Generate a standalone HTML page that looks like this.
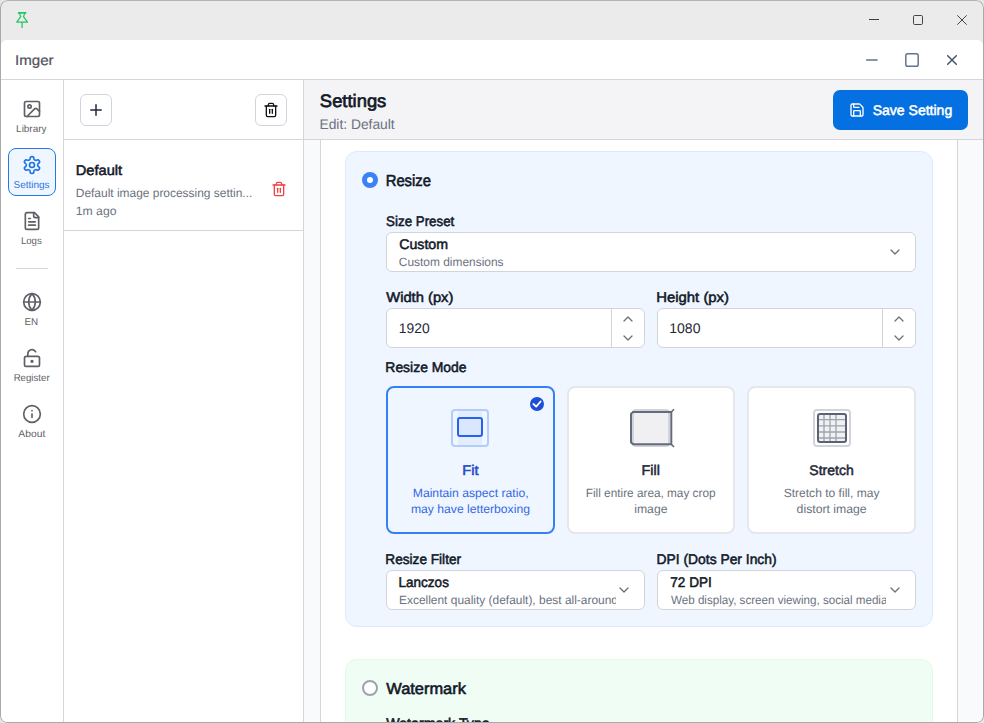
<!DOCTYPE html>
<html>
<head>
<meta charset="utf-8">
<title>Imger</title>
<style>
*{box-sizing:border-box;margin:0;padding:0}
html,body{width:984px;height:723px;overflow:hidden;background:#e4e4e4;font-family:"Liberation Sans",sans-serif;}
body{position:relative}
.abs{position:absolute}
.t{position:absolute;white-space:nowrap;line-height:20px;height:20px;color:#1f2937;text-rendering:geometricPrecision}
.b{font-weight:bold}
svg{position:absolute;overflow:visible}
#outer{left:0;top:0;width:984px;height:723px;background:#ebebeb;border-radius:8px 8px 7px 7px;overflow:hidden}
#frame{left:0;top:0;width:984px;height:723px;border:1px solid #a9a9a9;border-top-color:#b4b4b4;border-radius:8px 8px 7px 7px;z-index:50}
#inner{left:1px;top:40px;width:982px;height:690px;background:#fff;border-radius:6px 6px 0 0;overflow:hidden}
/* inside #inner coords are page minus (1,40); we instead use page coords via #pg */
#pg{left:-1px;top:-40px;width:984px;height:723px}
#tbar{left:0;top:40px;width:984px;height:40px;border-bottom:1px solid #d5d5da;background:#fff}
#nav{left:0;top:80px;width:64px;height:650px;border-right:1px solid #d5d5da;background:#fff}
#list{left:64px;top:80px;width:240px;height:650px;border-right:1px solid #d5d5da;background:#fff}
#main{left:304px;top:80px;width:680px;height:650px;background:#f9fafb}
#mhead{left:304px;top:80px;width:680px;height:60px;background:#f4f4f6;border-bottom:1px solid #d5d5da}
#card{left:320px;top:140px;width:638px;height:600px;background:#fff;border-left:1px solid #d5d5da;border-right:1px solid #d5d5da}
.nl{font-size:11px;text-align:center;color:#5f5f66}
.lab{font-size:14px;color:#111827}
.box{border:1px solid #d1d5db;border-radius:6px;background:#fff}
.sv{font-size:14px;color:#111827}
.sd{font-size:12.500px;color:#6b7280}
.num{font-size:14px;color:#1f2937}
.mt{font-size:14.500px;text-align:center;color:#1f2937}
.md{font-size:12.500px;text-align:center;color:#6b7280;line-height:16px;height:16px}
.chev{fill:none;stroke:#6f7076;stroke-width:1.300;stroke-linecap:round;stroke-linejoin:round}
#grid{background-image:linear-gradient(to right,transparent 5px,#9ca3af 5px,#9ca3af 6px,transparent 6px),linear-gradient(to bottom,transparent 5px,#9ca3af 5px,#9ca3af 6px,transparent 6px);background-size:6px 6px}
</style>
</head>
<body>
<div id="outer" class="abs">
  <!-- outer title bar icons -->
  <svg style="left:14px;top:11px" width="16" height="18" viewBox="0 0 16 18" fill="none" stroke="#25c464" stroke-width="1.250" stroke-linejoin="round" stroke-linecap="round"><path d="M4.600 1.900H11.600" stroke-width="1.700"/><path d="M5.500 2.400L6.700 5.700L2.700 11.100H13.500L9.500 5.700L10.700 2.400M8.100 11.100V16.500"/></svg>
  <svg style="left:869px;top:19px" width="10" height="1" viewBox="0 0 10 1"><rect width="10" height="1" fill="#3c3c3c"/></svg>
  <svg style="left:913px;top:15px" width="10" height="10" viewBox="0 0 10 10"><rect x="0.500" y="0.500" width="9" height="9" rx="1.200" stroke="#444" stroke-width="1" fill="none"/></svg>
  <svg style="left:957px;top:15px" width="10" height="10" viewBox="0 0 10 10"><path d="M0.300 0.300L9.700 9.700M9.700 0.300L0.300 9.700" stroke="#444" stroke-width="1" fill="none"/></svg>
  <div id="inner" class="abs"><div id="pg" class="abs">
    <div id="tbar" class="abs"></div>
    <div id="nav" class="abs"></div>
    <div id="list" class="abs"></div>
    <div id="main" class="abs"></div>
    <div id="mhead" class="abs"></div>
    <div id="card" class="abs"></div>
    <!-- inner title bar -->
    <svg style="left:866px;top:59px" width="12" height="2" viewBox="0 0 12 2"><path d="M0.7 1H11" stroke="#64748b" stroke-width="1.6" stroke-linecap="round" fill="none"/></svg>
    <svg style="left:905px;top:53px" width="14" height="14" viewBox="0 0 14 14"><rect x="0.8" y="0.8" width="12.4" height="12.4" rx="1.8" stroke="#64748b" stroke-width="1.5" fill="none"/></svg>
    <svg style="left:947px;top:55px" width="10" height="10" viewBox="0 0 10 10"><path d="M0.7 0.7L9.3 9.3M9.3 0.7L0.7 9.3" stroke="#475569" stroke-width="1.5" stroke-linecap="round" fill="none"/></svg>

    <!-- nav -->
    <div class="abs" style="left:8px;top:148px;width:48px;height:48px;border:1px solid #2179e8;border-radius:8px;background:#eff6ff"></div>
    <div class="abs" style="left:16px;top:268px;width:32px;height:1px;background:#d5d5da"></div>
    <!-- Library icon -->
    <svg style="left:22px;top:99px" width="20" height="20" viewBox="0 0 24 24" fill="none" stroke="#5f5f66" stroke-width="2" stroke-linecap="round" stroke-linejoin="round"><rect x="3" y="3" width="18" height="18" rx="2"/><circle cx="9" cy="9" r="2"/><path d="m21 15-3.086-3.086a2 2 0 0 0-2.828 0L6 21"/></svg>
    <!-- Settings icon -->
    <svg style="left:22px;top:155px" width="20" height="20" viewBox="0 0 24 24" fill="none" stroke="#1f75e6" stroke-width="2" stroke-linecap="round" stroke-linejoin="round"><path d="M12.22 2h-.44a2 2 0 0 0-2 2v.18a2 2 0 0 1-1 1.73l-.43.25a2 2 0 0 1-2 0l-.15-.08a2 2 0 0 0-2.730.73l-.22.38a2 2 0 0 0 .73 2.730l.15.1a2 2 0 0 1 1 1.720v.51a2 2 0 0 1-1 1.740l-.15.090a2 2 0 0 0-.73 2.730l.22.380a2 2 0 0 0 2.730.730l.15-.080a2 2 0 0 1 2 0l.43.250a2 2 0 0 1 1 1.730V20a2 2 0 0 0 2 2h.44a2 2 0 0 0 2-2v-.180a2 2 0 0 1 1-1.730l.43-.250a2 2 0 0 1 2 0l.15.080a2 2 0 0 0 2.730-.730l.22-.390a2 2 0 0 0-.73-2.730l-.15-.080a2 2 0 0 1-1-1.740v-.5a2 2 0 0 1 1-1.740l.15-.090a2 2 0 0 0 .73-2.730l-.22-.380a2 2 0 0 0-2.730-.730l-.15.080a2 2 0 0 1-2 0l-.43-.250a2 2 0 0 1-1-1.730V4a2 2 0 0 0-2-2z"/><circle cx="12" cy="12" r="3"/></svg>
    <!-- Logs icon -->
    <svg style="left:22px;top:211px" width="20" height="20" viewBox="0 0 24 24" fill="none" stroke="#5f5f66" stroke-width="2" stroke-linecap="round" stroke-linejoin="round"><path d="M15 2H6a2 2 0 0 0-2 2v16a2 2 0 0 0 2 2h12a2 2 0 0 0 2-2V7Z"/><path d="M14 2v4a2 2 0 0 0 2 2h4"/><path d="M10 9H8"/><path d="M16 13H8"/><path d="M16 17H8"/></svg>
    <!-- Globe -->
    <svg style="left:22px;top:292px" width="20" height="20" viewBox="0 0 24 24" fill="none" stroke="#5f5f66" stroke-width="2" stroke-linecap="round" stroke-linejoin="round"><circle cx="12" cy="12" r="10"/><path d="M12 2a14.500 14.500 0 0 0 0 20 14.500 14.500 0 0 0 0-20"/><path d="M2 12h20"/></svg>
    <!-- Lock open -->
    <svg style="left:22px;top:348px" width="20" height="20" viewBox="0 0 24 24" fill="none" stroke="#5f5f66" stroke-width="2" stroke-linecap="round" stroke-linejoin="round"><circle cx="12" cy="16" r="1"/><rect x="3" y="10" width="18" height="12" rx="2"/><path d="M7 10V7a5 5 0 0 1 9.330-2.500"/></svg>
    <!-- Info -->
    <svg style="left:22px;top:404px" width="20" height="20" viewBox="0 0 24 24" fill="none" stroke="#5f5f66" stroke-width="2" stroke-linecap="round" stroke-linejoin="round"><circle cx="12" cy="12" r="10"/><path d="M12 16v-4"/><path d="M12 8h.01"/></svg>
    <!-- list header -->
    <div class="abs" style="left:64px;top:139px;width:239px;height:1px;background:#d5d5da"></div>
    <div class="abs" style="left:80px;top:94px;width:32px;height:32px;border:1px solid #d1d5db;border-radius:6px;background:#fff"></div>
    <svg style="left:90px;top:104px" width="12" height="12" viewBox="0 0 12 12"><path d="M6 0.8V11.2M0.800 6H11.200" stroke="#1f2937" stroke-width="1.5" stroke-linecap="round" fill="none"/></svg>
    <div class="abs" style="left:255px;top:94px;width:32px;height:32px;border:1px solid #d1d5db;border-radius:6px;background:#fff"></div>
    <svg style="left:263px;top:102px" width="16" height="16" viewBox="0 0 24 24" fill="none" stroke="#111318" stroke-width="2" stroke-linecap="round" stroke-linejoin="round"><path d="M3 6h18"/><path d="M19 6v14c0 1-1 2-2 2H7c-1 0-2-1-2-2V6"/><path d="M8 6V4c0-1 1-2 2-2h4c1 0 2 1 2 2v2"/><line x1="10" x2="10" y1="11" y2="17"/><line x1="14" x2="14" y1="11" y2="17"/></svg>
    <!-- list item -->
    <div class="abs" style="left:64px;top:230px;width:239px;height:1px;background:#d5d5da"></div>
    <svg style="left:271px;top:181px" width="16" height="16" viewBox="0 0 24 24" fill="none" stroke="#ee4046" stroke-width="2" stroke-linecap="round" stroke-linejoin="round"><path d="M3 6h18"/><path d="M19 6v14c0 1-1 2-2 2H7c-1 0-2-1-2-2V6"/><path d="M8 6V4c0-1 1-2 2-2h4c1 0 2 1 2 2v2"/><line x1="10" x2="10" y1="11" y2="17"/><line x1="14" x2="14" y1="11" y2="17"/></svg>

    <!-- main header -->
    <div class="abs" style="left:833px;top:90px;width:135px;height:40px;border-radius:7px;background:#0570e2"></div>
    <svg style="left:849px;top:102px" width="16" height="16" viewBox="0 0 24 24" fill="none" stroke="#fff" stroke-width="2" stroke-linecap="round" stroke-linejoin="round"><path d="M15.200 3a2 2 0 0 1 1.400.6l3.800 3.800a2 2 0 0 1 .6 1.400V19a2 2 0 0 1-2 2H5a2 2 0 0 1-2-2V5a2 2 0 0 1 2-2z"/><path d="M17 21v-7a1 1 0 0 0-1-1H8a1 1 0 0 0-1 1v7"/><path d="M7 3v4a1 1 0 0 0 1 1h7"/></svg>
    <!-- blue card -->
    <div class="abs" style="left:345px;top:151px;width:588px;height:476px;border:1px solid #dbeafe;border-radius:12px;background:#eff6ff"></div>
    <div class="abs" style="left:362px;top:172px;width:16px;height:16px;border-radius:50%;background:#3b82f6"></div>
    <div class="abs" style="left:367px;top:177px;width:6px;height:6px;border-radius:50%;background:#fff"></div>

    <div class="abs box" style="left:386px;top:232px;width:530px;height:40px"></div>
    <svg class="chev" style="left:890px;top:248px" width="10" height="8" viewBox="0 0 10 8"><path d="M1 2L5 6L9 2"/></svg>

    <div class="abs box" style="left:386px;top:308px;width:259px;height:40px"></div>
    <div class="abs" style="left:611px;top:309px;width:1px;height:38px;background:#d1d5db"></div>
    <svg class="chev" style="left:623px;top:314.5px" width="10" height="8" viewBox="0 0 10 8"><path d="M1 6L5 2L9 6"/></svg>
    <svg class="chev" style="left:623px;top:334.300px" width="10" height="8" viewBox="0 0 10 8"><path d="M1 2L5 6L9 2"/></svg>

    <div class="abs box" style="left:657px;top:308px;width:259px;height:40px"></div>
    <div class="abs" style="left:882px;top:309px;width:1px;height:38px;background:#d1d5db"></div>
    <svg class="chev" style="left:894px;top:314.5px" width="10" height="8" viewBox="0 0 10 8"><path d="M1 6L5 2L9 6"/></svg>
    <svg class="chev" style="left:894px;top:334.300px" width="10" height="8" viewBox="0 0 10 8"><path d="M1 2L5 6L9 2"/></svg>

    <!-- mode cards -->
    <div class="abs" style="left:386px;top:386px;width:169px;height:148px;border:2px solid #3580f6;border-radius:8px;background:#eff6ff"></div>
    <div class="abs" style="left:567px;top:386px;width:168px;height:148px;border:2px solid #e5e7eb;border-radius:8px;background:#fff"></div>
    <div class="abs" style="left:747px;top:386px;width:169px;height:148px;border:2px solid #e5e7eb;border-radius:8px;background:#fff"></div>

    <!-- fit icon -->
    <div class="abs" style="left:451px;top:409px;width:38px;height:38px;border:2px solid #b3cdfb;border-radius:4px;background:#eff6ff;overflow:hidden"><div class="abs" style="left:5px;top:0;width:24px;height:34px;background:#e3edfd"></div></div>
    <div class="abs" style="left:457px;top:417px;width:26px;height:20px;border:2px solid #2563eb;border-radius:3px;background:#dbe7fe"></div>
    <!-- check -->
    <div class="abs" style="left:530px;top:397px;width:14px;height:14px;border-radius:50%;background:#1d4ed8"></div>
    <svg style="left:530px;top:397px" width="14" height="14" viewBox="0 0 14 14"><path d="M3.400 7L6.200 9.600L10.600 4.500" stroke="#fff" stroke-width="1.800" fill="none" stroke-linecap="round" stroke-linejoin="round"/></svg>

    <!-- fill icon -->
    <div class="abs" style="left:632px;top:409px;width:38px;height:38px;border:2px solid #d1d5db;border-radius:4px;background:#f0f0f2"></div>
    <svg style="left:628px;top:407px" width="48" height="42" viewBox="628 407 48 42" fill="none" stroke="#656b7c" stroke-width="2" stroke-linejoin="miter"><path d="M633 411.900H671.300V444.300H633L631 442.300V413.900Z"/><path d="M671.500 411.700L674 409.200M671.500 444.500L674 447" stroke-width="1.600"/></svg>

    <!-- stretch icon -->
    <div class="abs" style="left:813px;top:409px;width:38px;height:38px;border:2px solid #d1d5db;border-radius:4px;background:#fff"></div>
    <div class="abs" style="left:817px;top:413px;width:30px;height:30px;border:2px solid #5b6275;border-radius:3px;background-color:#f1f1f3;"></div><svg style="left:819px;top:415px" width="26" height="26" viewBox="819 415 26 26" fill="none" stroke="#9ea4b0" stroke-width="1.300"><path d="M824 415V441M830 415V441M836 415V441M819 419.700H845M819 425.900H845M819 432H845M819 438H845"/></svg>

    <div class="abs box" style="left:386px;top:570px;width:259px;height:40px"></div>
    <svg class="chev" style="left:619px;top:586px" width="10" height="8" viewBox="0 0 10 8"><path d="M1 2L5 6L9 2"/></svg>

    <div class="abs box" style="left:657px;top:570px;width:259px;height:40px"></div>
    <svg class="chev" style="left:890px;top:586px" width="10" height="8" viewBox="0 0 10 8"><path d="M1 2L5 6L9 2"/></svg>

    <!-- green card -->
    <div class="abs" style="left:345px;top:659px;width:588px;height:200px;border:1px solid #dcfce7;border-radius:12px;background:#f0fdf4"></div>
    <div class="abs" style="left:362px;top:680px;width:16px;height:16px;border-radius:50%;border:2px solid #9ca3af;background:#fff"></div>
    <div class="t" id="t_imger" style="left:14px;top:50px;font-size:14px;color:#55555f;transform:translateX(0.94px) scaleX(1.0811);transform-origin:0 0;-webkit-text-stroke:0.23px currentColor;">Imger</div>
    <div class="t" id="t_library" style="left:16px;top:120px;font-size:10px;color:#5f5f66;transform:translateX(0.11px) scaleX(0.9931);transform-origin:0 0;">Library</div>
    <div class="t" id="t_settings" style="left:13px;top:176px;font-size:10px;color:#1f75e6;transform:translateX(0.61px) scaleX(0.9914);transform-origin:0 0;">Settings</div>
    <div class="t" id="t_logs" style="left:20px;top:232px;font-size:10px;color:#5f5f66;transform:translateX(0.89px) scaleX(0.9649);transform-origin:0 0;">Logs</div>
    <div class="t" id="t_en" style="left:24px;top:313px;font-size:10px;color:#5f5f66;transform:translateX(0.57px) scaleX(0.9795);transform-origin:0 0;">EN</div>
    <div class="t" id="t_register" style="left:13px;top:369px;font-size:10px;color:#5f5f66;transform:translateX(0.63px) scaleX(0.9667);transform-origin:0 0;">Register</div>
    <div class="t" id="t_about" style="left:18px;top:425px;font-size:10px;color:#5f5f66;transform:translateX(0.30px) scaleX(1.0346);transform-origin:0 0;">About</div>
    <div class="t" id="t_default" style="left:75px;top:160px;font-size:14px;color:#111827;transform:translateX(0.77px) scaleX(1.0452);transform-origin:0 0;-webkit-text-stroke:0.52px currentColor;">Default</div>
    <div class="t" id="t_desc" style="left:75px;top:183px;font-size:12px;color:#6b7280;transform:translateX(0.78px) scaleX(0.9948);transform-origin:0 0;">Default image processing settin...</div>
    <div class="t" id="t_ago" style="left:75px;top:201px;font-size:12px;color:#6b7280;transform:translateX(0.80px) scaleX(1.0157);transform-origin:0 0;">1m ago</div>
    <div class="t" id="t_h1" style="left:319px;top:91px;font-size:18px;color:#111827;transform:translateX(0.86px) scaleX(1.0218);transform-origin:0 0;-webkit-text-stroke:0.67px currentColor;">Settings</div>
    <div class="t" id="t_h2" style="left:319px;top:114px;font-size:14px;color:#6b7280;transform:translateX(0.45px) scaleX(0.9860);transform-origin:0 0;">Edit: Default</div>
    <div class="t" id="t_save" style="left:872px;top:100px;font-size:14px;color:#ffffff;transform:translateX(0.70px) scaleX(1.0013);transform-origin:0 0;-webkit-text-stroke:0.52px currentColor;">Save Setting</div>
    <div class="t" id="t_resize" style="left:385px;top:172px;font-size:16px;color:#111827;transform:translateX(0.67px) scaleX(0.9265);transform-origin:0 0;-webkit-text-stroke:0.59px currentColor;">Resize</div>
    <div class="t" id="t_l1" style="left:386px;top:211px;font-size:14px;color:#111827;transform:translateX(0.11px) scaleX(0.9525);transform-origin:0 0;-webkit-text-stroke:0.52px currentColor;">Size Preset</div>
    <div class="t" id="t_custom" style="left:399px;top:234px;font-size:14px;color:#111827;transform:translateX(0.22px) scaleX(1.0117);transform-origin:0 0;-webkit-text-stroke:0.52px currentColor;">Custom</div>
    <div class="t" id="t_customd" style="left:398px;top:252px;font-size:12px;color:#6b7280;transform:translateX(0.83px) scaleX(0.9933);transform-origin:0 0;">Custom dimensions</div>
    <div class="t" id="t_l2" style="left:386px;top:287px;font-size:14px;color:#111827;transform:translateX(0.25px) scaleX(1.0516);transform-origin:0 0;-webkit-text-stroke:0.52px currentColor;">Width (px)</div>
    <div class="t" id="t_1920" style="left:398px;top:318px;font-size:14px;color:#1f2937;transform:translateX(0.86px) scaleX(0.9906);transform-origin:0 0;">1920</div>
    <div class="t" id="t_l3" style="left:656px;top:287px;font-size:14px;color:#111827;transform:translateX(0.24px) scaleX(1.0627);transform-origin:0 0;-webkit-text-stroke:0.52px currentColor;">Height (px)</div>
    <div class="t" id="t_1080" style="left:669px;top:318px;font-size:14px;color:#1f2937;transform:translateX(0.30px) scaleX(1.0000);transform-origin:0 0;">1080</div>
    <div class="t" id="t_l4" style="left:385px;top:357px;font-size:14px;color:#111827;transform:translateX(0.32px) scaleX(0.9948);transform-origin:0 0;-webkit-text-stroke:0.52px currentColor;">Resize Mode</div>
    <div class="t" id="t_fit" style="left:462px;top:460px;font-size:14px;color:#274bc4;transform:translateX(0.20px) scaleX(1.0500);transform-origin:0 0;-webkit-text-stroke:0.52px currentColor;">Fit</div>
    <div class="t" id="t_fitd1" style="left:412px;top:483px;font-size:12px;color:#3469e6;transform:translateX(0.73px) scaleX(1.0156);transform-origin:0 0;">Maintain aspect ratio,</div>
    <div class="t" id="t_fitd2" style="left:410px;top:499px;font-size:12px;color:#3469e6;transform:translateX(0.99px) scaleX(1.0129);transform-origin:0 0;">may have letterboxing</div>
    <div class="t" id="t_fill" style="left:641px;top:460px;font-size:14px;color:#1f2937;transform:translateX(0.54px) scaleX(1.0215);transform-origin:0 0;-webkit-text-stroke:0.52px currentColor;">Fill</div>
    <div class="t" id="t_filld1" style="left:585px;top:483px;font-size:12px;color:#6b7280;transform:translateX(0.77px) scaleX(0.9828);transform-origin:0 0;">Fill entire area, may crop</div>
    <div class="t" id="t_filld2" style="left:634px;top:499px;font-size:12px;color:#6b7280;transform:translateX(0.25px) scaleX(1.0168);transform-origin:0 0;">image</div>
    <div class="t" id="t_stretch" style="left:809px;top:460px;font-size:14px;color:#1f2937;transform:translateX(0.37px) scaleX(0.9992);transform-origin:0 0;-webkit-text-stroke:0.52px currentColor;">Stretch</div>
    <div class="t" id="t_strd1" style="left:783px;top:483px;font-size:12px;color:#6b7280;transform:translateX(0.64px) scaleX(1.0049);transform-origin:0 0;">Stretch to fill, may</div>
    <div class="t" id="t_strd2" style="left:796px;top:499px;font-size:12px;color:#6b7280;transform:translateX(0.60px) scaleX(1.0200);transform-origin:0 0;">distort image</div>
    <div class="t" id="t_l5" style="left:385px;top:549px;font-size:14px;color:#111827;transform:translateX(0.28px) scaleX(0.9740);transform-origin:0 0;-webkit-text-stroke:0.52px currentColor;">Resize Filter</div>
    <div class="t" id="t_lanczos" style="left:398px;top:572px;font-size:14px;color:#111827;transform:translateX(0.53px) scaleX(0.9657);transform-origin:0 0;-webkit-text-stroke:0.52px currentColor;">Lanczos</div>
    <div class="abs" style="left:398.51px;top:590.00px;width:217.24px;height:20px;overflow:hidden"><div class="t" id="t_lanczosd" style="left:0;top:0;font-size:12px;color:#6b7280;transform:scaleX(0.9948);transform-origin:0 0;">Excellent quality (default), best all-around</div></div>
    <div class="t" id="t_l6" style="left:656px;top:549px;font-size:14px;color:#111827;transform:translateX(0.51px) scaleX(0.9896);transform-origin:0 0;-webkit-text-stroke:0.52px currentColor;">DPI (Dots Per Inch)</div>
    <div class="t" id="t_dpi" style="left:670px;top:572px;font-size:14px;color:#111827;transform:translateX(0.30px) scaleX(0.9679);transform-origin:0 0;-webkit-text-stroke:0.52px currentColor;">72 DPI</div>
    <div class="abs" style="left:670.50px;top:590.00px;width:215.80px;height:20px;overflow:hidden"><div class="t" id="t_dpid" style="left:0;top:0;font-size:12px;color:#6b7280;transform:scaleX(0.9676);transform-origin:0 0;">Web display, screen viewing, social media</div></div>
    <div class="t" id="t_wm" style="left:386px;top:680px;font-size:16px;color:#111827;transform:translateX(0.25px) scaleX(1.0256);transform-origin:0 0;-webkit-text-stroke:0.59px currentColor;">Watermark</div>
    <div class="t" id="t_l7" style="left:386px;top:713px;font-size:14px;color:#111827;transform:translateX(0.32px) scaleX(1.0141);transform-origin:0 0;-webkit-text-stroke:0.52px currentColor;">Watermark Type</div>

  </div></div>
  <div id="frame" class="abs"></div>
</div>
</body>
</html>
